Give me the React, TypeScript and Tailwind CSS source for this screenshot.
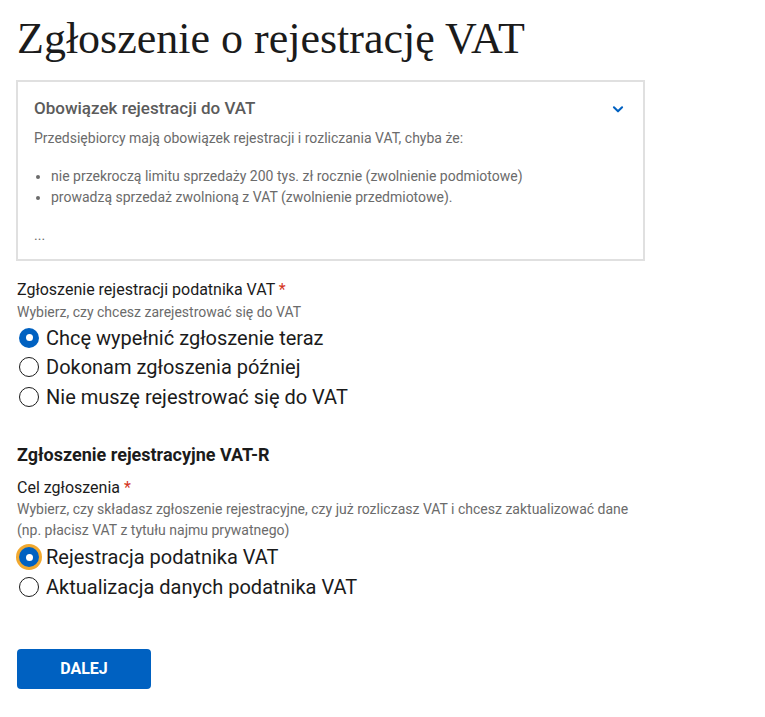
import React, { useState } from 'react';

const Radio: React.FC<{ label: string; checked: boolean; focused?: boolean; onChange: () => void }> = ({ label, checked, focused, onChange }) => (
  <label className="flex items-center gap-[7px] h-[29.5px] cursor-pointer" onClick={onChange}>
    <span
      className={`flex items-center justify-center w-[20px] h-[20px] rounded-full shrink-0 ${
        checked ? 'bg-[#0061c1]' : 'border-[1.5px] border-[#1b1b1b] bg-white'
      } ${focused ? 'ring-[3px] ring-[#f2a92f]' : ''}`}
    >
      {checked && <span className="w-[7px] h-[7px] rounded-full bg-white" />}
    </span>
    <span className="text-[20px] text-[#1b1b1b] leading-none">{label}</span>
  </label>
);

const App: React.FC = () => {
  const [reg, setReg] = useState(0);
  const [cel, setCel] = useState(0);

  return (
    <div className="min-h-screen bg-white px-[17px] pt-[12px] pb-[28px]" style={{ fontFamily: 'Roboto, "Liberation Sans", sans-serif' }}>
      <h1 className="text-[44px] leading-[54px] text-[#1b1b1b]" style={{ fontFamily: '"Liberation Serif", "DejaVu Serif", serif' }}>
        Zgłoszenie o rejestrację VAT
      </h1>

      <div className="mt-[14px] w-[629px] h-[181px] border-2 border-[#e0e0e0] px-[16px] pt-[14px] -ml-[1px]">
        <div className="flex items-center justify-between">
          <h2 className="text-[17px] font-medium text-[#5b5b5b]">Obowiązek rejestracji do VAT</h2>
          <svg className="w-[14px] h-[14px] mr-[2px]" viewBox="0 0 24 24" fill="none" stroke="#0061c1" strokeWidth={3.5} strokeLinecap="round" strokeLinejoin="round">
            <path d="M5 9l7 7 7-7" />
          </svg>
        </div>
        <p className="mt-[6px] text-[14px] text-[#6b6b6b] leading-[20px]">Przedsiębiorcy mają obowiązek rejestracji i rozliczania VAT, chyba że:</p>
        <ul className="mt-[18px] text-[14px] text-[#6b6b6b] list-disc pl-[17px] leading-[21px]">
          <li>nie przekroczą limitu sprzedaży 200 tys. zł rocznie (zwolnienie podmiotowe)</li>
          <li>prowadzą sprzedaż zwolnioną z VAT (zwolnienie przedmiotowe).</li>
        </ul>
        <p className="mt-[17px] text-[14px] text-[#6b6b6b] leading-[20px]">...</p>
      </div>

      <div className="mt-[18px]">
        <div className="text-[16px] text-[#1b1b1b] leading-[22px]">
          Zgłoszenie rejestracji podatnika VAT <span className="text-[#d4351c]">*</span>
        </div>
        <div className="text-[14px] text-[#6b6b6b] leading-[21px] mt-[1px]">Wybierz, czy chcesz zarejestrować się do VAT</div>
        <div className="pl-[2px]">
          <Radio label="Chcę wypełnić zgłoszenie teraz" checked={reg === 0} onChange={() => setReg(0)} />
          <Radio label="Dokonam zgłoszenia później" checked={reg === 1} onChange={() => setReg(1)} />
          <Radio label="Nie muszę rejestrować się do VAT" checked={reg === 2} onChange={() => setReg(2)} />
        </div>
      </div>

      <h3 className="mt-[32px] text-[18px] font-bold text-[#1b1b1b] leading-[22px]">Zgłoszenie rejestracyjne VAT-R</h3>

      <div className="mt-[11px]">
        <div className="text-[16px] text-[#1b1b1b] leading-[22px]">
          Cel zgłoszenia <span className="text-[#d4351c]">*</span>
        </div>
        <div className="text-[14px] text-[#6b6b6b] leading-[21px]">
          Wybierz, czy składasz zgłoszenie rejestracyjne, czy już rozliczasz VAT i chcesz zaktualizować dane
          <br />
          (np. płacisz VAT z tytułu najmu prywatnego)
        </div>
        <div className="pl-[2px] mt-[2px]">
          <Radio label="Rejestracja podatnika VAT" checked={cel === 0} focused={cel === 0} onChange={() => setCel(0)} />
          <Radio label="Aktualizacja danych podatnika VAT" checked={cel === 1} onChange={() => setCel(1)} />
        </div>
      </div>

      <button className="mt-[47px] w-[134px] h-[40px] rounded-[4px] bg-[#0061c1] text-white text-[16px] font-bold">
        DALEJ
      </button>
    </div>
  );
};

export default App;
